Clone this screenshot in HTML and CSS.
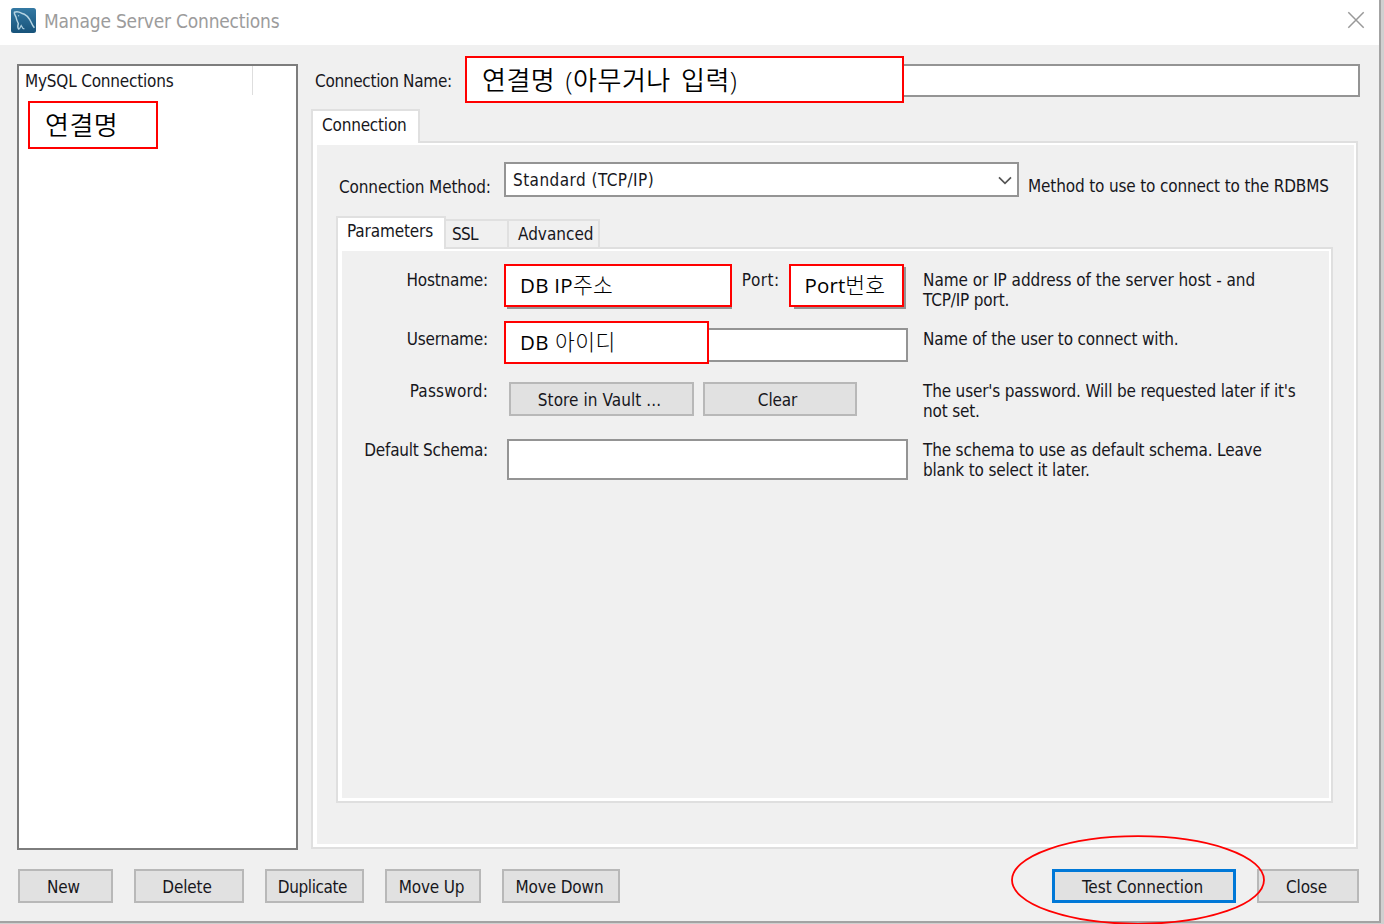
FILE: index.html
```html
<!DOCTYPE html>
<html lang="ko">
<head>
<meta charset="utf-8">
<title>Manage Server Connections</title>
<link rel="stylesheet" href="styles.css">
</head>
<body>
<div class="desktop">
<div class="window">
  <header class="titlebar">
    <svg class="logo" width="25" height="25" viewBox="0 0 25 25">
      <defs><linearGradient id="sea" x1="0" y1="0" x2="0" y2="1"><stop offset="0" stop-color="#3479a3"/><stop offset="1" stop-color="#17537a"/></linearGradient></defs>
      <rect width="25" height="25" rx="2.5" fill="url(#sea)"/>
      <path d="M8.200 21.200C6.800 20.800 6.700 18 7.300 15.500C6.200 13.500 5.400 11.500 5 9C4.300 7.500 3 6 3.400 4.300C5.500 3.300 8.500 4 10.500 5.200C15.500 6 18.500 10.500 20.500 15C21.300 17 22.300 18.500 23.400 19.800" fill="none" stroke="#b5d4e2" stroke-width="1.500"/>
      <path d="M8.200 21.200L10.200 17.500L12 20.500L13.400 20.800" fill="none" stroke="#a8cbdc" stroke-width="1.300"/>
      <circle cx="7.600" cy="7.800" r=".7" fill="#9fc5d8"/>
    </svg>
    <span class="title">Manage Server Connections</span>
    <svg class="close" width="18" height="18" viewBox="0 0 18 18"><path d="M1.300 1.300L16.700 16.700M16.700 1.300L1.300 16.700" stroke="#999" stroke-width="1.500" fill="none"/></svg>
  </header>

  <main class="body">
    <aside class="list">
      <div class="list-head"><span>MySQL Connections</span></div>
      <div class="note note-item">연결명</div>
    </aside>

    <section class="editor">
      <div class="name-row">
        <label>Connection Name:</label>
        <div class="field name-field"><div class="note note-name">연결명 (아무거나 입력)</div></div>
      </div>
      <div class="tabs"><div class="tab active main-tab">Connection</div></div>
      <div class="panel outer">
        <div class="method-row">
          <label>Connection Method:</label>
          <div class="field select"><span>Standard (TCP/IP)</span>
            <svg width="14" height="9" viewBox="0 0 14 9"><path d="M1 1.300L7 7.300L13 1.300" fill="none" stroke="#555" stroke-width="1.700"/></svg>
          </div>
          <span class="method-help">Method to use to connect to the RDBMS</span>
        </div>
        <div class="tabs">
          <div class="tab active params-tab">Parameters</div>
          <div class="tab ssl-tab">SSL</div>
          <div class="tab adv-tab">Advanced</div>
        </div>
        <div class="panel inner">
          <div class="row host-row">
            <label>Hostname:</label>
            <div class="controls">
              <div class="field host-field"><div class="note note-host">DB IP<span class="ko">주소</span></div></div>
              <span class="port-label">Port:</span>
              <div class="field port-field"><div class="note note-port">Port<span class="ko">번호</span></div></div>
            </div>
            <p class="help"><span class="host-help">Name or IP address of the server host - and</span><br>TCP/IP port.</p>
          </div>
          <div class="row user-row">
            <label>Username:</label>
            <div class="controls"><div class="field user-field"><div class="note note-user">DB <span class="ko">아이디</span></div></div></div>
            <p class="help">Name of the user to connect with.</p>
          </div>
          <div class="row pass-row">
            <label class="pass-label">Password:</label>
            <div class="controls buttons"><button class="vault">Store in Vault ...</button><button class="clear">Clear</button></div>
            <p class="help">The user's password. Will be requested later if it's<br>not set.</p>
          </div>
          <div class="row schema-row">
            <label class="schema-label">Default Schema:</label>
            <div class="controls"><div class="field schema-field"></div></div>
            <p class="help">The schema to use as default schema. Leave<br>blank to select it later.</p>
          </div>
        </div>
      </div>
    </section>
  </main>

  <footer class="footer">
    <button class="new">New</button>
    <button class="delete">Delete</button>
    <button class="duplicate">Duplicate</button>
    <button class="up">Move Up</button>
    <button class="down">Move Down</button>
    <button class="test">Test Connection</button>
    <button class="close-btn">Close</button>
  </footer>
</div>
<svg class="ring" width="256" height="90" viewBox="0 0 256 90"><ellipse cx="128" cy="45" rx="126" ry="43.800" fill="none" stroke="#f00" stroke-width="1.800"/></svg>
</div>
</body>
</html>
```
FILE: styles.css
```css
* { box-sizing: border-box; }
body {
  margin: 0;
  background: #d0d0d0;
  color: #17171c;
  font: 17px/20px "DejaVu Sans Condensed", "Noto Sans CJK KR", sans-serif;
  letter-spacing: -0.15px;
}
.desktop { position: relative; width: 1384px; height: 924px; overflow: hidden; }
.window {
  width: 1381px;
  height: 923px;
  display: flex;
  flex-direction: column;
  background: #f0f0f0;
  border-right: 2px solid #a3a3a3;
  border-bottom: 2px solid #a3a3a3;
}
.titlebar { height: 45px; flex: none; display: flex; align-items: flex-start; padding: 8px 14px 0 11px; background: #fff; }
.title { margin: 2px 0 0 8px; font-size: 19px; line-height: 22px; letter-spacing: -0.2px; color: #9c9c9c; }
.close { margin: 3px 0 0 auto; }

.body { display: flex; height: 805px; flex: none; padding: 19px 18px 0 17px; }
.list { position: relative; width: 281px; height: 786px; border: 2px solid #7d7d7d; background: #fff; }
.list-head { width: 234px; height: 29px; padding: 5px 0 0 6px; border-right: 1px solid #dedede; letter-spacing: -0.2px; }

.editor { flex: 1; margin-left: 13px; display: flex; flex-direction: column; }
.name-row { display: flex; height: 33px; margin-left: 4px; }
.name-row label { width: 152px; padding-top: 7px; letter-spacing: -0.3px; }
.field { position: relative; background: #fff; border: 2px solid #949494; }
.name-field { flex: 1; margin-right: 1px; }

.tabs { display: flex; align-items: flex-end; position: relative; z-index: 1; margin-bottom: -2px; }
.tab { border: 2px solid #e0e0e0; border-left: 0; }
.tab.active { background: #fff; border-left: 2px solid #e0e0e0; border-bottom: 0; }
.main-tab { width: 109px; height: 34px; margin-top: 12px; padding: 4px 0 0 9px; letter-spacing: -0.2px; }
.panel { background: #f0f0f0; border: 2px solid #dfdfdf; box-shadow: inset 4px 2px #fff, inset -2px -3px #fff; }
.outer { width: 1047px; height: 708px; padding: 19px 23px 0; }

.method-row { display: flex; height: 35px; }
.method-row label { width: 168px; padding: 15px 0 0 3px; letter-spacing: -0.12px; }
.select { width: 515px; padding: 6px 4px 0 7px; display: flex; justify-content: space-between; letter-spacing: 0.45px; }
.select svg { margin-top: 6px; margin-right: 1px; }
.method-help { margin: 14px 0 0 9px; white-space: nowrap; }
.outer .tabs { margin-top: 19px; }
.params-tab { width: 110px; height: 33px; padding: 3px 0 0 9px; }
.ssl-tab { width: 63px; height: 30px; padding: 3px 0 0 6px; letter-spacing: -0.7px; }
.adv-tab { width: 91px; height: 30px; padding: 3px 0 0 9px; letter-spacing: 0; }
.inner { width: 997px; height: 556px; padding-top: 18px; }

.row { display: grid; grid-template-columns: 150px 400px 1fr; column-gap: 18px; }
.row label { text-align: right; padding-top: 3px; letter-spacing: -0.2px; }
.row .controls { display: flex; margin-left: 1px; }
.help { margin: 3px 0 0 -1px; white-space: nowrap; letter-spacing: -0.17px; }
.host-help { letter-spacing: -0.04px; }
.row .pass-label { letter-spacing: 0.2px; }
.row .schema-label { letter-spacing: -0.25px; }
.host-row { height: 60px; }
.user-row { height: 51px; }
.pass-row { height: 60px; }
.user-row label, .schema-row label { padding-top: 2px; }
.user-row .help, .schema-row .help { margin-top: 2px; }
.host-field { width: 226px; height: 42px; }
.port-label { margin: 3px 11px 0 10px; width: 41px; letter-spacing: 0.5px; }
.port-field { width: 113px; height: 42px; }
.user-field { width: 401px; height: 34px; flex: none; margin-top: 1px; }
.schema-field { width: 401px; height: 41px; flex: none; margin-top: 1px; }

button {
  height: 34px;
  padding: 2px 0 0;
  background: #e1e1e1;
  border: 2px solid #b8b8b8;
  color: inherit;
  font: inherit;
  letter-spacing: -0.15px;
}
.buttons { padding: 4px 0 0 2px; gap: 9px; }
.vault { width: 185px; padding-right: 4px; letter-spacing: 0.08px; }
.clear { width: 154px; padding-right: 5px; }

.footer { display: flex; padding: 19px 20px 0 18px; }
.footer button { padding: 1px 4px 0 0; }
.footer .new { width: 95px; margin-right: 21px; }
.footer .delete { width: 110px; margin-right: 21px; }
.footer .duplicate { width: 99px; margin-right: 21px; letter-spacing: -0.4px; }
.footer .up { width: 96px; margin-right: 21px; padding-right: 3px; }
.footer .down { width: 118px; padding-right: 3px; }
.footer .test { width: 184px; margin-left: auto; border: 3px solid #0078d7; padding-right: 3px; letter-spacing: 0; }
.footer .close-btn { width: 102px; margin-left: 21px; padding-right: 3px; }

/* Red callouts placed over the dialog */
.note {
  position: absolute;
  z-index: 2;
  background: #fff;
  border: 2px solid #f00;
  color: #000;
  font-family: "Open Sans", "Noto Sans CJK KR", sans-serif;
  font-size: 20.5px;
  line-height: 37px;
  white-space: nowrap;
  letter-spacing: 0.3px;
}
.ko { font-weight: 300; font-size: 21.5px; }
.note-item { left: 9px; top: 35px; width: 130px; height: 48px; padding-left: 15px; font-size: 26px; line-height: 45px; font-weight: 350; letter-spacing: 0.5px; }
.note-name { left: -4px; top: -10px; width: 439px; height: 47px; padding-left: 15px; font-size: 26px; line-height: 44px; font-weight: 350; letter-spacing: 0.5px; word-spacing: 3px; }
.note-host { left: -5px; top: -5px; width: 228px; height: 43px; padding-left: 14px; }
.note-port { left: -7px; top: -5px; width: 115px; height: 43px; padding-left: 14px; letter-spacing: 0.1px; }
.note-user { left: -5px; top: -9px; width: 205px; height: 43px; padding-left: 14px; letter-spacing: 0.5px; }
.ring { position: absolute; left: 1010px; top: 835px; z-index: 3; }
```
